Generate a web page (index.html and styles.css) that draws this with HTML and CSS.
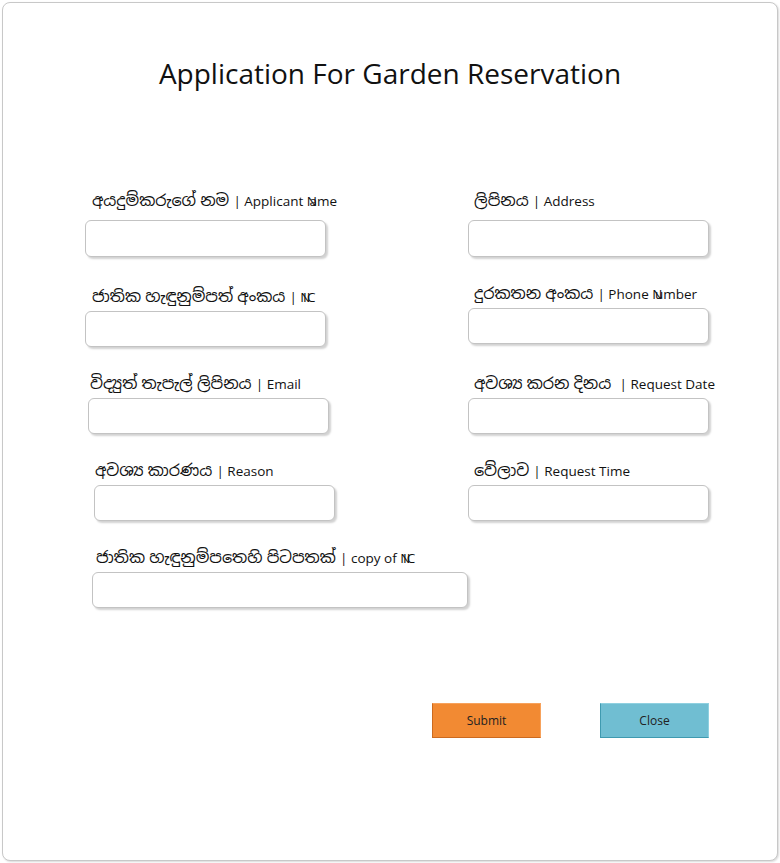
FILE: index.html
```html
<!DOCTYPE html>
<html lang="si">
<head>
<meta charset="utf-8">
<title>Application For Garden Reservation</title>
<link rel="stylesheet" href="styles.css">
</head>
<body>
<div class="card">
  <h1 class="title">Application For Garden Reservation</h1>
  <form class="form">
    <div class="field f1">
      <label class="lbl">අයදුම්කරුගේ නම <span class="en">| Applicant <span class="ov">N</span>ame</span></label>
      <div class="inp"></div>
    </div>
    <div class="field r1">
      <label class="lbl">ලිපිනය <span class="en">| Address</span></label>
      <div class="inp"></div>
    </div>
    <div class="field f2">
      <label class="lbl">ජාතික හැඳුනුම්පත් අංකය <span class="en">| <span class="ov">N</span>IC</span></label>
      <div class="inp"></div>
    </div>
    <div class="field r2">
      <label class="lbl">දුරකතන අංකය <span class="en">| Phone <span class="ov">N</span>umber</span></label>
      <div class="inp"></div>
    </div>
    <div class="field f3">
      <label class="lbl">විද්‍යුත් තැපැල් ලිපිනය <span class="en">| Email</span></label>
      <div class="inp"></div>
    </div>
    <div class="field r3">
      <label class="lbl">අවශ්‍ය කරන දිනය &nbsp;<span class="en">| Request Date</span></label>
      <div class="inp"></div>
    </div>
    <div class="field f4">
      <label class="lbl">අවශ්‍ය කාරණය <span class="en">| Reason</span></label>
      <div class="inp"></div>
    </div>
    <div class="field r4">
      <label class="lbl">වේලාව <span class="en">| Request Time</span></label>
      <div class="inp"></div>
    </div>
    <div class="field f5">
      <label class="lbl">ජාතික හැඳුනුම්පතෙහි පිටපතක් <span class="en">| copy of <span class="ov">N</span>IC</span></label>
      <div class="inp wide"></div>
    </div>
  </form>
  <div class="actions">
    <button class="btn submit" type="button">Submit</button>
    <button class="btn close" type="button">Close</button>
  </div>
</div>
</body>
</html>
```
FILE: styles.css
```css
html, body {
  margin: 0;
  padding: 0;
  background: #ffffff;
}
body {
  padding: 2px 2px 2px 2px;
  font-family: "Open Sans", "Noto Sans Sinhala", "Noto Sans", "DejaVu Sans", sans-serif;
  color: #000;
}
.card {
  box-sizing: border-box;
  width: 776px;
  height: 859px;
  border: 1px solid #c8c8c8;
  border-radius: 8px;
  box-shadow: 1px 1px 2px rgba(0,0,0,0.15);
  background: #fff;
}
.title {
  margin: 48px 0 0 0;
  text-align: center;
  font-weight: 400;
  font-size: 28px;
  line-height: 44px;
  color: #111;
}
.form {
  display: grid;
  grid-template-columns: 383px 260px;
  row-gap: 26px;
  align-items: start;
  margin: 95px 0 0 82px;
}
.field {
  display: flex;
  flex-direction: column;
}
.lbl {
  display: block;
  height: 20px;
  line-height: 20px;
  margin-bottom: 5px;
  font-size: 16px;
  white-space: nowrap;
  color: #111;
}
.en {
  font-size: 13.5px;
}
.ov {
  display: inline-block;
  margin-right: -0.55em;
}
.inp {
  box-sizing: border-box;
  width: 241px;
  height: 36px;
  border: 1px solid #c3c3c3;
  border-radius: 6px;
  box-shadow: 2px 2px 2px rgba(0,0,0,0.18);
  background: #fff;
}
.inp.wide {
  width: 376px;
}
.f1 .lbl, .r1 .lbl { margin-bottom: 10px; }
.f1 .inp, .r1 .inp { height: 37px; }
.f1 .lbl, .f2 .lbl { padding-left: 7px; }
.f2 { padding-top: 3px; }
.f3 { margin-left: 3px; }
.f3 .lbl { padding-left: 2px; }
.f4 { margin-left: 9px; }
.f4 .lbl { padding-left: 1px; }
.f5 { margin-left: 7px; grid-column: 1 / span 2; }
.f5 .lbl { padding-left: 4px; }
.r1 .lbl, .r2 .lbl, .r3 .lbl, .r4 .lbl { padding-left: 6px; }
.actions {
  display: flex;
  gap: 59px;
  margin: 95px 0 0 429px;
}
.btn {
  box-sizing: border-box;
  width: 109px;
  height: 35px;
  padding: 0;
  font-family: "Open Sans", sans-serif;
  font-size: 12px;
  color: #222;
  border-radius: 0;
  border: 1px solid;
  cursor: pointer;
}
.submit {
  background: #f28a33;
  border-color: #f7a25c #f7a25c #cc6a1f #cc6a1f;
}
.close {
  background: #70bed2;
  border-color: #8fd0e0 #8fd0e0 #3f9ab0 #3f9ab0;
}
```
